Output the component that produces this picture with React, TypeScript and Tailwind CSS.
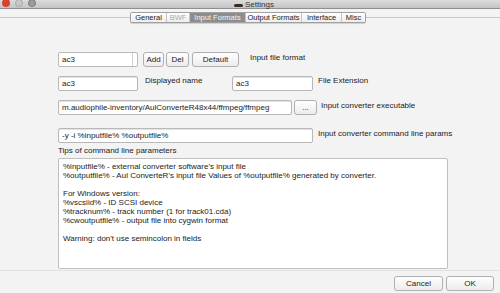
import React from "react"

const font = { fontFamily: '"Liberation Sans", "DejaVu Sans", sans-serif' }

function Field({ value, className }: { value: string; className: string }) {
  return (
    <div
      className={`h-[15px] bg-white border border-[#b8b8b8] rounded-[2px] shadow-[inset_0_1px_1px_rgba(0,0,0,0.12)] px-[3px] flex items-center text-[8px] text-[#222] whitespace-nowrap overflow-hidden ${className}`}
    >
      {value}
    </div>
  )
}

function Btn({ label, className }: { label: string; className: string }) {
  return (
    <div
      className={`h-[15px] border border-[#b0b0b0] rounded-[3px] bg-gradient-to-b from-white to-[#ececec] flex items-center justify-center text-[8px] text-[#222] ${className}`}
    >
      {label}
    </div>
  )
}

export default function App() {
  const tabs = ["General", "BWF", "Input Formats", "Output Formats", "Interface", "Misc"]
  const tabW = ["w-[35px]", "w-[23px]", "w-[56px]", "w-[56px]", "w-[40px]", "w-[24px]"]

  return (
    <div className="w-[500px] h-[293px] bg-[#f3f3f3] overflow-hidden relative" style={font}>
      {/* Title bar */}
      <div className="h-[9px] bg-gradient-to-b from-[#dcdcdc] to-[#c4c4c4] border-b border-[#8f8f8f] flex items-center relative">
        <div className="flex gap-[5px] pl-[2px] -mt-[3px]">
          <div className="w-[8px] h-[8px] rounded-full bg-[#d8412f]" />
          <div className="w-[8px] h-[8px] rounded-full bg-[#c9c9c9] border border-[#a8a8a8]" />
          <div className="w-[8px] h-[8px] rounded-full bg-[#9c9c9c] border border-[#7a7a7a]" />
        </div>
        <div className="absolute left-[234px] top-[-1px] flex items-center gap-[2px] text-[8px] text-[#333]">
          <span className="inline-block w-[9px] h-[3px] bg-[#3a2a20] rounded-full" />
          <span>Settings</span>
        </div>
      </div>

      {/* Tabs */}
      <div className="relative mt-[3px] h-[11px]">
        <div className="absolute left-0 right-0 top-[5px] border-t border-[#c8c8c8]" />
        <div className="absolute left-[130px] top-0 flex h-[11px] border border-[#a0a0a0] rounded-[2px] bg-white overflow-hidden shadow-[0_1px_1px_rgba(0,0,0,0.15)]">
          {tabs.map((t, i) => (
            <div
              key={t}
              className={`${tabW[i]} flex items-center justify-center text-[7.5px] ${
                i > 0 ? "border-l border-[#c4c4c4]" : ""
              } ${
                t === "Input Formats"
                  ? "bg-[#8d8d8d] text-[#f4f4f4]"
                  : t === "BWF"
                  ? "bg-gradient-to-b from-white to-[#ededed] text-[#aaa]"
                  : "bg-gradient-to-b from-white to-[#ededed] text-[#222]"
              }`}
            >
              {t}
            </div>
          ))}
        </div>
      </div>

      {/* Content */}
      <div className="pl-[58px] pt-[29px] text-[8px] text-[#222]">
        <div className="flex items-center h-[15px]">
          <div className="w-[80px] h-[15px] bg-white border border-[#b8b8b8] rounded-[2px] flex items-center">
            <span className="flex-1 px-[3px]">ac3</span>
            <span className="w-px h-full bg-[#d0d0d0] mr-[4px]" />
          </div>
          <Btn label="Add" className="ml-[5px] w-[21px]" />
          <Btn label="Del" className="ml-[2px] w-[23px]" />
          <Btn label="Default" className="ml-[3px] w-[47px]" />
          <span className="ml-[11px] -mt-[4px]">Input file format</span>
        </div>

        <div className="flex items-center h-[15px] mt-[9px]">
          <Field value="ac3" className="w-[80px]" />
          <span className="ml-[7px] -mt-[6px] w-[87px]">Displayed name</span>
          <Field value="ac3" className="w-[81px]" />
          <span className="ml-[5px] -mt-[6px]">File Extension</span>
        </div>

        <div className="flex items-center h-[15px] mt-[9px]">
          <Field value="m.audiophile-inventory/AulConverteR48x44/ffmpeg/ffmpeg" className="w-[234px] text-[8.2px]" />
          <Btn label="..." className="ml-[2px] w-[23px]" />
          <span className="ml-[4px] -mt-[4px]">Input converter executable</span>
        </div>

        <div className="flex items-center h-[15px] mt-[13px]">
          <Field value="-y -i %inputfile% %outputfile%" className="w-[255px]" />
          <span className="ml-[5px] -mt-[4px]">Input converter command line params</span>
        </div>

        <div className="mt-[3px] leading-[10px]">Tips of command line parameters</div>

        <div className="mt-[2px] w-[390px] h-[111px] bg-white border border-[#c0c0c0] rounded-[2px] px-[4px] pt-[3px] text-[8px] leading-[9px] whitespace-pre">
          {`%inputfile% - external converter software's input file
%outputfile% - Aul ConverteR's input file Values of %outputfile% generated by converter.

For Windows version:
%vscsiid% - ID SCSI device
%tracknum% - track number (1 for track01.cda)
%cwoutputfile% - output file into cygwin format

Warning: don't use semincolon in fields`}
        </div>
      </div>

      {/* Bottom */}
      <div className="absolute left-0 right-0 top-[270px] border-t border-[#e2e2e2]" />
      <div className="absolute right-[6px] top-[276px] flex gap-[3px]">
        <Btn label="Cancel" className="w-[49px]" />
        <Btn label="OK" className="w-[48px]" />
      </div>
    </div>
  )
}
